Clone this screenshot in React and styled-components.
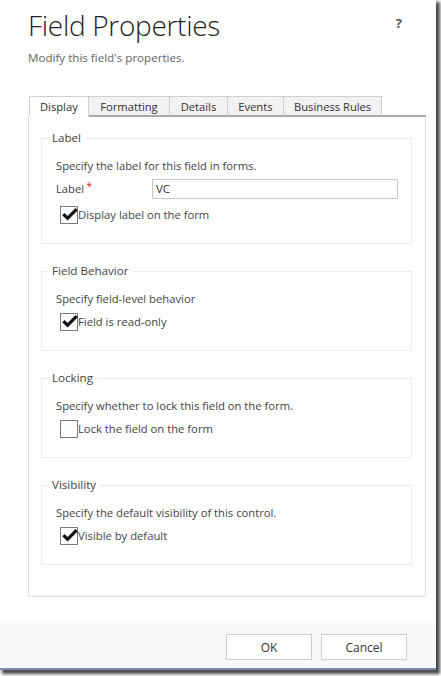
import React from "react";
import styled, { createGlobalStyle } from "styled-components";

const Global = createGlobalStyle`
  html, body { margin: 0; padding: 0; background: #ffffff; overflow: hidden; }
  body { font-family: "Open Sans", "Noto Sans", sans-serif; }
  * { box-sizing: border-box; }
`;

const Stage = styled.div`
  width: 441px;
  height: 676px;
  background: #ffffff;
`;

const Window = styled.div`
  width: 436px;
  height: 670px;
  background: #ffffff;
  border-bottom: 2px solid #7d8fb3;
  box-shadow: 3px 3px 3px 1px rgba(30, 30, 30, 0.8);
  display: flex;
  flex-direction: column;
`;

const Header = styled.div`
  padding: 0 30px 0 28px;
`;

const TitleRow = styled.div`
  display: flex;
  justify-content: space-between;
  align-items: flex-start;
  margin-top: 7px;
`;

const Title = styled.h1`
  margin: 0;
  font-family: "Open Sans", sans-serif;
  font-weight: 300;
  font-size: 28px;
  line-height: 36px;
  color: #222;
  letter-spacing: -0.3px;
`;

const Help = styled.span`
  font-family: "Open Sans", sans-serif;
  font-weight: 700;
  font-size: 13px;
  line-height: 16px;
  color: #555;
  margin-top: 8px;
  margin-right: 4px;
`;

const Subtitle = styled.p`
  margin: 7px 0 0;
  font-size: 11.6px;
  line-height: 16px;
  color: #666;
`;

const TabStrip = styled.div`
  display: flex;
  margin: 30px 10px 0 28px;
  height: 21px;
`;

const Tab = styled.div`
  height: 21px;
  padding: 0 ${(p) => p.$pad}px;
  font-size: 11.2px;
  line-height: 20px;
  color: #333;
  background: ${(p) => (p.$active ? "#ffffff" : "#f2f2f2")};
  border: 1px solid #d0d0d0;
  border-left: ${(p) => (p.$first ? "1px solid #d0d0d0" : "none")};
  border-bottom: ${(p) => (p.$active ? "1px solid #ffffff" : "2px solid #a8a8a8")};
  margin-left: ${(p) => (p.$first ? "1px" : "0")};
  white-space: nowrap;
`;

const TabFill = styled.div`
  flex: 1;
  border-bottom: 2px solid #a8a8a8;
`;

const Panel = styled.div`
  margin: 0 10px 0 28px;
  border: 1px solid #dcdcdc;
  border-top: none;
  padding: 14px 13px 31px 12px;
  display: flex;
  flex-direction: column;
  gap: 20px;
`;

const Group = styled.fieldset`
  margin: 0;
  border: 1px solid #ececec;
  padding: 0 10px 20px 14px;
  min-width: 0;
`;

const Legend = styled.legend`
  margin-left: -8px;
  padding: 0 4px;
  font-size: 11.6px;
  line-height: 14px;
  color: #444;
`;

const Desc = styled.div`
  margin-top: 13px;
  font-size: 11.25px;
  line-height: 16px;
  color: #444;
`;

const FieldRow = styled.div`
  display: flex;
  align-items: center;
  margin-top: 5px;
  height: 20px;
`;

const FieldLabel = styled.label`
  width: 96px;
  font-size: 11.25px;
  line-height: 16px;
  color: #444;
`;

const Star = styled.span`
  color: #d6262b;
  font-size: 11px;
  vertical-align: top;
  position: relative;
  top: -3px;
  margin-left: 2px;
`;

const TextInput = styled.div`
  width: 246px;
  height: 20px;
  border: 1px solid #c8c8c8;
  padding: 0 3px;
  font-size: 11.5px;
  line-height: 18px;
  color: #333;
`;

const CheckRow = styled.div`
  display: flex;
  align-items: center;
  margin-top: ${(p) => p.$mt}px;
  margin-left: 4px;
  height: 17px;
`;

const Box = styled.span`
  position: relative;
  width: 18px;
  height: 18px;
  border: 1px solid #7a7a7a;
  background: #fff;
  flex: none;
`;

const Tick = styled.svg`
  position: absolute;
  left: 0px;
  top: 0px;
  width: 17px;
  height: 15px;
`;

const CheckText = styled.span`
  font-size: 11.25px;
  line-height: 17px;
  color: #444;
`;

const Footer = styled.div`
  margin-top: auto;
  height: 45px;
  background: #f8f8f8;
  display: flex;
  justify-content: flex-end;
  align-items: flex-start;
  gap: 9px;
  padding: 11px 29px 0 0;
`;

const Button = styled.button`
  width: 86px;
  height: 26px;
  border: 1px solid #cfcfcf;
  background: #ffffff;
  font-family: "Open Sans", sans-serif;
  font-size: 12px;
  color: #333;
  padding: 0;
`;

function Checkbox({ checked, label, mt }) {
  return (
    <CheckRow $mt={mt}>
      <Box>
        {checked && (
          <Tick viewBox="0 0 17 15">
            <path d="M1.2 8.2 L3.5 5.9 L6.6 9 L14.5 1 L16.8 3.3 L6.6 13.6 Z" fill="#111" />
          </Tick>
        )}
      </Box>
      <CheckText>{label}</CheckText>
    </CheckRow>
  );
}

const tabs = [
  { name: "Display", pad: 10 },
  { name: "Formatting", pad: 11.5 },
  { name: "Details", pad: 10.5 },
  { name: "Events", pad: 10.5 },
  { name: "Business Rules", pad: 10 },
];

export default function App() {
  return (
    <Stage>
      <Global />
      <Window>
        <Header>
          <TitleRow>
            <Title>Field Properties</Title>
            <Help>?</Help>
          </TitleRow>
          <Subtitle>Modify this field's properties.</Subtitle>
        </Header>
        <TabStrip>
          {tabs.map((t, i) => (
            <Tab key={t.name} $active={i === 0} $first={i === 0} $pad={t.pad}>
              {t.name}
            </Tab>
          ))}
          <TabFill />
        </TabStrip>
        <Panel>
          <Group>
            <Legend>Label</Legend>
            <Desc>Specify the label for this field in forms.</Desc>
            <FieldRow>
              <FieldLabel>
                Label<Star>*</Star>
              </FieldLabel>
              <TextInput>VC</TextInput>
            </FieldRow>
            <Checkbox checked label="Display label on the form" mt={7} />
          </Group>
          <Group>
            <Legend>Field Behavior</Legend>
            <Desc>Specify field-level behavior</Desc>
            <Checkbox checked label="Field is read-only" mt={6} />
          </Group>
          <Group>
            <Legend>Locking</Legend>
            <Desc>Specify whether to lock this field on the form.</Desc>
            <Checkbox label="Lock the field on the form" mt={6} />
          </Group>
          <Group>
            <Legend>Visibility</Legend>
            <Desc>Specify the default visibility of this control.</Desc>
            <Checkbox checked label="Visible by default" mt={6} />
          </Group>
        </Panel>
        <Footer>
          <Button>OK</Button>
          <Button>Cancel</Button>
        </Footer>
      </Window>
    </Stage>
  );
}
